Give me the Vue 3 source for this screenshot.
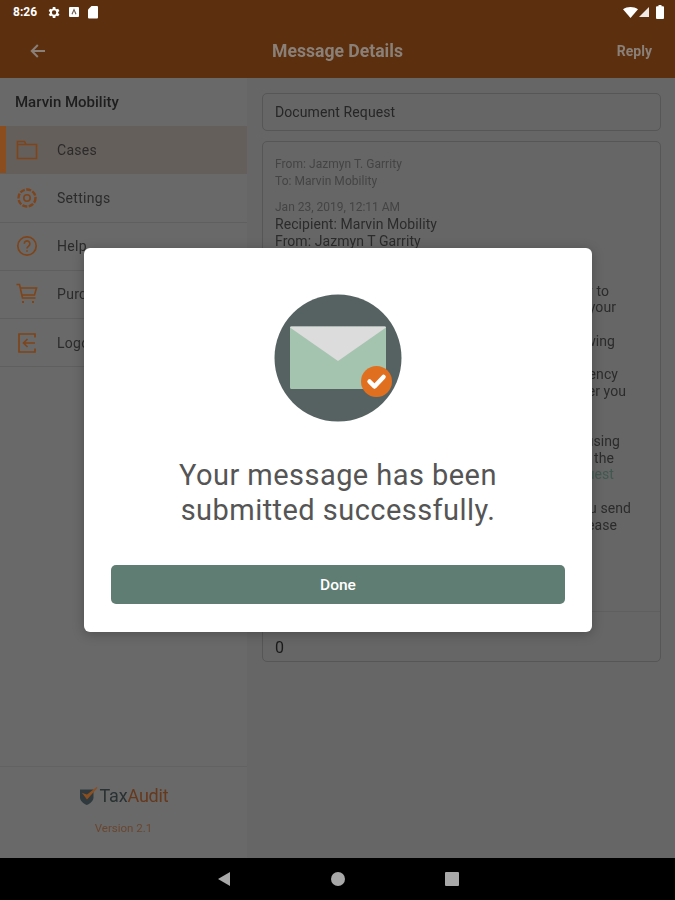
<script setup>
const menu = [
  { label: 'Cases', icon: 'folder', active: true },
  { label: 'Settings', icon: 'gear' },
  { label: 'Help', icon: 'help' },
  { label: 'Purchase', icon: 'cart' },
  { label: 'Logout', icon: 'logout' }
]

// right edge of each line is what shows past the dialog
const lines = [
  { text: 'Please provide the documents listed below to', width: 334 },
  { text: 'help us respond to the notice you sent for your', width: 341 },
  { text: '', width: 0 },
  { text: 'We need copies of the following', width: 340 },
  { text: '', width: 0 },
  { text: 'Notice from the state tax agency', width: 343 },
  { text: 'and any letter received after you', width: 351 },
  { text: '', width: 0 },
  { text: '', width: 0 },
  { text: 'these using', width: 345 },
  { text: 'from the', width: 339 },
  { text: 'Request', width: 339, link: true },
  { text: '', width: 0 },
  { text: 'you send', width: 356 },
  { text: 'please', width: 342 }
]
</script>

<template>
  <div class="screen">
    <header class="appbar">
      <div class="status">
        <span class="time">8:26</span>
        <svg class="st-icon" width="15" height="15" viewBox="0 0 24 24" fill="#fff">
          <path d="M19.4 13a7.5 7.5 0 0 0 0-2l2.1-1.6-2-3.500-2.500 1a7.5 7.5 0 0 0-1.700-1L14.900 3.200h-4l-.4 2.700a7.500 7.500 0 0 0-1.700 1l-2.500-1-2 3.500L6.400 11a7.500 7.500 0 0 0 0 2l-2.100 1.600 2 3.500 2.500-1a7.500 7.500 0 0 0 1.700 1l.4 2.700h4l.4-2.700a7.500 7.500 0 0 0 1.700-1l2.500 1 2-3.500zM12.900 15.500a3.500 3.500 0 1 1 0-7 3.500 3.500 0 0 1 0 7z" />
        </svg>
        <svg class="st-icon" width="12" height="12" viewBox="0 0 12 12">
          <rect x="1" y="1" width="10" height="10" rx="1" fill="#fff" />
          <path d="M4 8.200 6 3.600l2 4.600" fill="none" stroke="#6b5a4e" stroke-width="1.100" />
        </svg>
        <svg class="st-icon" width="12" height="14" viewBox="0 0 12 14">
          <path d="M4.500 1H10a1 1 0 0 1 1 1v10.500a1 1 0 0 1-1 1H2a1 1 0 0 1-1-1V4.500z" fill="#fff" />
        </svg>
        <span class="st-space"></span>
        <svg width="15" height="11" viewBox="0 0 16 12" preserveAspectRatio="none"><path d="M0 2.500C4.500-.8 11.500-.8 16 2.500L8 12z" fill="#fff" /></svg>
        <svg class="st-signal" width="10" height="10" viewBox="0 0 11 11"><path d="M11 0v11H0z" fill="#efeae6" /></svg>
        <svg class="st-battery" width="8" height="14" viewBox="0 0 8 14"><path d="M2.500 0h3v1.300H7a1 1 0 0 1 1 1V13a1 1 0 0 1-1 1H1a1 1 0 0 1-1-1V2.300a1 1 0 0 1 1-1h1.500z" fill="#fff" /></svg>
      </div>
      <div class="toolbar">
        <svg class="back" width="15" height="14" viewBox="0 0 15 14" fill="none" stroke="#8a8078" stroke-width="2">
          <path d="M15 7H2M7.800 1 1.800 7l6 6" />
        </svg>
        <h1>Message Details</h1>
        <span class="reply">Reply</span>
      </div>
    </header>

    <div class="content">
      <aside class="sidebar">
        <div class="account">Marvin Mobility</div>
        <ul class="menu">
          <li v-for="item in menu" :key="item.label" :class="{ active: item.active }">
            <svg class="menu-icon" width="22" height="22" viewBox="0 0 22 22" fill="none" stroke="#7f4419" stroke-width="1.600">
              <template v-if="item.icon === 'folder'">
                <path d="M1.500 2.500h7l1.500 3h10.500v14h-19zM1.500 5.500H10" />
              </template>
              <template v-else-if="item.icon === 'gear'">
                <circle cx="11" cy="11" r="3.200" />
                <circle cx="11" cy="11" r="8.500" stroke-width="2.400" stroke-dasharray="5 1.500" />
              </template>
              <template v-else-if="item.icon === 'help'">
                <circle cx="11" cy="11" r="9.200" stroke-width="1.700" />
                <path d="M8.300 8.700a2.800 2.800 0 1 1 4.400 2.300c-1.100.8-1.700 1.200-1.700 2.600" />
                <path d="M11 15.200v1.600" />
              </template>
              <template v-else-if="item.icon === 'cart'">
                <path d="M.5 1.500h3l3 13.500h13M4.500 5h16l-2 7H6" />
                <path d="M7 18v2M17 18v2" stroke-width="2" />
              </template>
              <template v-else>
                <path d="M19 5.500V2H3v18h16v-3.500" stroke-width="1.700" />
                <path d="M19 11H8M11.500 7 7.500 11l4 4" />
              </template>
            </svg>
            <span>{{ item.label }}</span>
          </li>
        </ul>
        <div class="brand">
          <div class="logo">
            <svg width="20" height="20" viewBox="0 0 20 20">
              <path d="M1 3.500h13.500v8c0 3.500-3.500 6-6.700 7.500C4.500 17.500 1 15 1 11.500z" fill="#303a3e" />
              <path d="M4.500 8 8 12.500 18 1.500 8.200 9.300z" fill="#8c4f20" stroke="#8c4f20" stroke-width="1.200" />
            </svg>
            <span class="tax">Tax</span><span class="audit">Audit</span>
          </div>
          <div class="version">Version 2.1</div>
        </div>
      </aside>

      <main class="detail">
        <div class="box subject">Document Request</div>
        <div class="box message">
          <div class="meta">
            <div>From: Jazmyn T. Garrity</div>
            <div>To: Marvin Mobility</div>
          </div>
          <div class="date">Jan 23, 2019, 12:11 AM</div>
          <div class="body-text">
            <div>Recipient: Marvin Mobility</div>
            <div>From: Jazmyn T Garrity</div>
            <div class="spacer"></div>
            <div class="spacer"></div>
            <div
              v-for="(line, i) in lines"
              :key="i"
              class="line"
              :class="{ link: line.link }"
              :style="{ width: line.width + 'px' }"
            >{{ line.text }}</div>
          </div>
          <div class="count">0</div>
        </div>
      </main>
    </div>

    <nav class="navbar">
      <svg width="14" height="16" viewBox="0 0 14 16"><path d="M13 1v14L1 8z" fill="#a8a8a8" /></svg>
      <span class="nav-home"></span>
      <span class="nav-square"></span>
    </nav>

    <div class="dialog">
      <svg class="art" width="128" height="128" viewBox="0 0 128 128">
        <circle cx="64" cy="64" r="63.500" fill="#566261" />
        <path d="M16 34a1.500 1.500 0 0 1 1.500-1.500h93a1.500 1.500 0 0 1 1.500 1.500v59.500a1.500 1.500 0 0 1-1.500 1.500h-93a1.500 1.500 0 0 1-1.500-1.500z" fill="#a5c4b0" />
        <path d="M16 33.500a1 1 0 0 1 1-1h94a1 1 0 0 1 1 1L64 67z" fill="#dcdcdc" />
        <circle cx="102.500" cy="87.500" r="15.500" fill="#e0701f" />
        <path d="M95.500 87.500l5 5 9-9.500" fill="none" stroke="#fff" stroke-width="4.500" stroke-linecap="round" stroke-linejoin="round" />
      </svg>
      <p class="success">Your message has been<br />submitted successfully.</p>
      <button class="done" type="button">Done</button>
    </div>
  </div>
</template>

<style scoped>
.screen {
  position: relative;
  width: 675px;
  height: 900px;
  display: flex;
  flex-direction: column;
  overflow: hidden;
  background: #666;
  font-family: Roboto, "Liberation Sans", sans-serif;
  color: #2d2d2d;
}

.appbar {
  height: 78px;
  flex: none;
  background: #5c2f0f;
}
.status {
  height: 24px;
  display: flex;
  align-items: center;
  padding: 0 11px 0 13px;
  gap: 7px;
}
.time {
  color: #fff;
  font-size: 12px;
  font-weight: 700;
  width: 25px;
  margin-right: 1px;
}
.st-space { flex: 1; }
.st-signal { margin-left: -6px; }
.toolbar {
  position: relative;
  height: 54px;
  display: flex;
  align-items: center;
  justify-content: space-between;
  padding: 0 14px 5px 30px;
  filter: blur(0.4px);
}
.toolbar h1 {
  position: absolute;
  left: 0;
  right: 0;
  margin: 0;
  text-align: center;
  font-size: 17.6px;
  font-weight: 700;
  color: #8a8078;
}
.reply {
  font-size: 14px;
  font-weight: 700;
  color: #8a8078;
  margin-right: 9px;
}

.content {
  flex: 1;
  display: flex;
  min-height: 0;
  filter: blur(0.4px);
}
.sidebar {
  width: 247px;
  flex: none;
  display: flex;
  flex-direction: column;
  background: #696969;
}
.account {
  height: 48px;
  padding: 15px 15px 0;
  box-sizing: border-box;
  font-size: 15px;
  font-weight: 500;
  color: #1e1e1e;
}
.menu {
  list-style: none;
  margin: 0;
  padding: 0;
}
.menu li {
  height: 47.25px;
  display: flex;
  align-items: center;
  gap: 19px;
  padding-left: 16px;
  border-bottom: 1px solid #5f5f5f;
  font-size: 14px;
  color: #2b2b2b;
  letter-spacing: 0.3px;
}
.menu li.active {
  background: #655f5b;
  box-shadow: inset 6px 0 0 #8c4d1e;
  border-bottom-color: #655f5b;
}
.menu-icon { flex: none; }

.brand {
  margin-top: auto;
  height: 92px;
  border-top: 1px solid #626262;
  display: flex;
  flex-direction: column;
  align-items: center;
  padding-top: 18px;
  box-sizing: border-box;
}
.logo {
  display: flex;
  align-items: center;
  font-size: 18px;
  letter-spacing: -0.2px;
}
.logo svg { margin-right: 1px; }
.tax { color: #2a3133; }
.audit { color: #66391d; }
.version {
  margin-top: 15px;
  font-size: 11.5px;
  color: #6a4630;
}

.detail {
  flex: 1;
  min-width: 0;
  padding: 15px 14px 0 15px;
  background: #666;
}
.box {
  border: 1px solid #565656;
  border-radius: 5px;
  box-sizing: border-box;
}
.subject {
  height: 38px;
  display: flex;
  align-items: center;
  padding-left: 12px;
  font-size: 14px;
  letter-spacing: 0.1px;
  color: #262626;
}
.message {
  position: relative;
  height: 521px;
  margin-top: 10px;
  padding: 14px 12px 0;
  overflow: hidden;
}
.meta {
  font-size: 12px;
  line-height: 17px;
  letter-spacing: 0.05px;
  color: #444;
}
.date {
  margin-top: 9px;
  font-size: 12px;
  line-height: 17px;
  color: #444;
}
.body-text {
  font-size: 14px;
  line-height: 16.7px;
  letter-spacing: 0.07px;
  color: #2b2b2b;
}
.spacer { height: 16.7px; }
.line {
  min-height: 16.7px;
  text-align: right;
  white-space: nowrap;
}
.line.link { color: #3f5a50; }
.count {
  position: absolute;
  left: 0;
  right: 0;
  bottom: 0;
  height: 50px;
  box-sizing: border-box;
  border-top: 1px solid #5f5f5f;
  padding: 27px 0 0 12px;
  font-size: 16px;
  line-height: 18px;
  color: #1a1a1a;
}

.navbar {
  height: 42px;
  flex: none;
  background: #000;
  display: flex;
  align-items: center;
  justify-content: center;
  gap: 100px;
  padding-left: 1px;
}
.nav-home {
  width: 14px;
  height: 14px;
  border-radius: 50%;
  background: #a8a8a8;
}
.nav-square {
  width: 14px;
  height: 14px;
  border-radius: 1px;
  background: #a8a8a8;
}

.dialog {
  position: absolute;
  left: 84px;
  top: 248px;
  width: 508px;
  height: 384px;
  box-sizing: border-box;
  background: #fff;
  border-radius: 6px;
  padding-top: 46px;
  box-shadow: 0 2px 12px rgba(0, 0, 0, 0.25);
  display: flex;
  flex-direction: column;
  align-items: center;
}
.art { display: block; }
.success {
  margin: 36px 0 0;
  text-align: center;
  font-size: 29px;
  line-height: 35px;
  color: #555;
  letter-spacing: 0.45px;
}
.done {
  margin-top: 37px;
  width: 454px;
  height: 39px;
  border: none;
  border-radius: 5px;
  background: #607d73;
  color: #fff;
  font-family: inherit;
  font-size: 15.5px;
  font-weight: 500;
}
</style>
